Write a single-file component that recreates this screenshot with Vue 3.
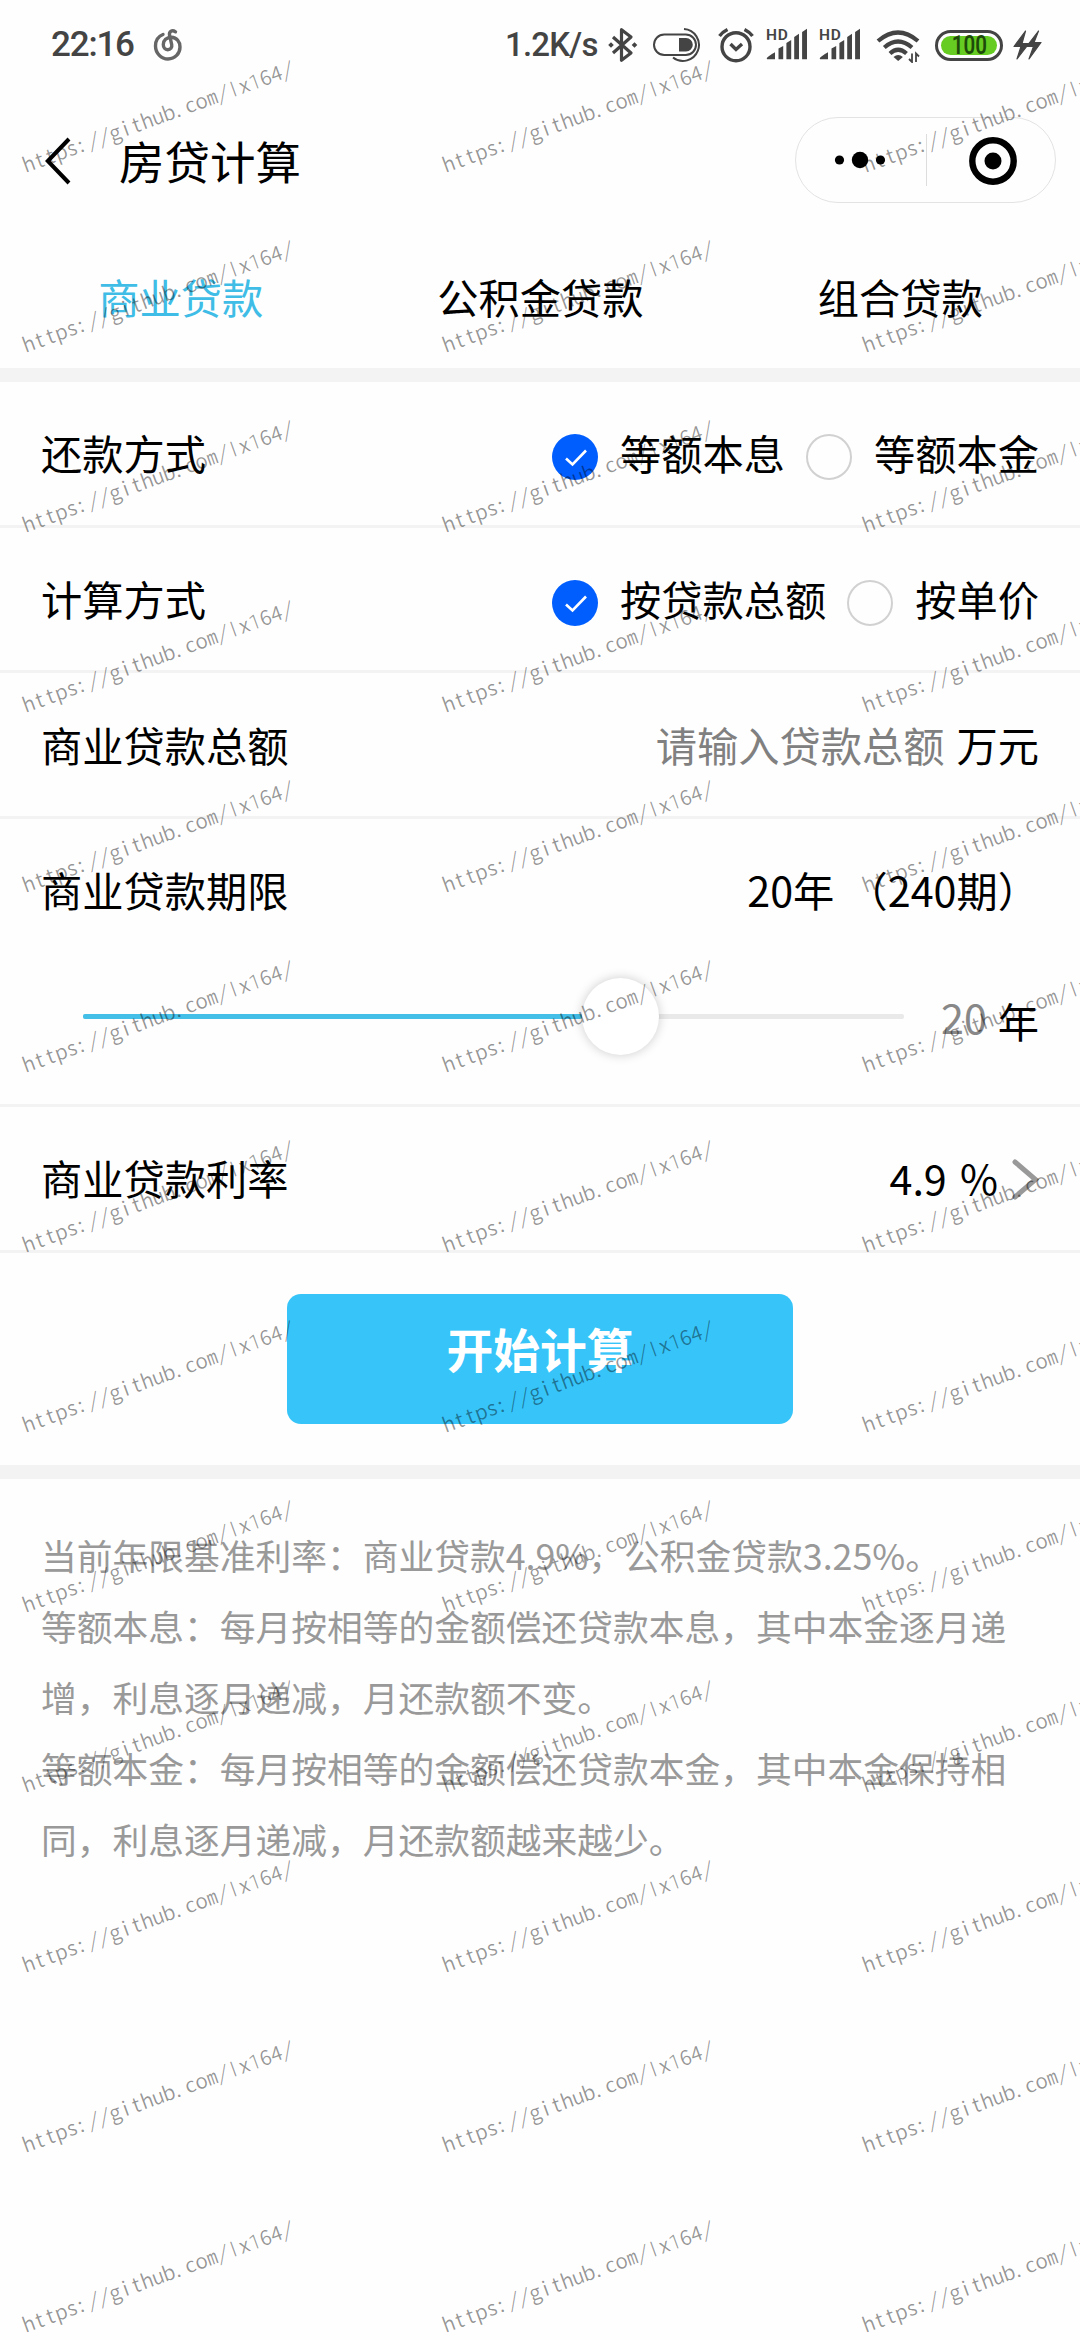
<script setup>
const tabs = [
  { name: '商业贷款', active: true },
  { name: '公积金贷款', active: false },
  { name: '组合贷款', active: false },
]

const radioRows = [
  { label: '还款方式', options: [{ text: '等额本息', on: true }, { text: '等额本金', on: false }] },
  { label: '计算方式', options: [{ text: '按贷款总额', on: true }, { text: '按单价', on: false }] },
]

const notes = [
  '当前年限基准利率：商业贷款4.9%，公积金贷款3.25%。',
  '等额本息：每月按相等的金额偿还贷款本息，其中本金逐月递增，利息逐月递减，月还款额不变。',
  '等额本金：每月按相等的金额偿还贷款本金，其中本金保持相同，利息逐月递减，月还款额越来越少。',
]

// watermark grid
const markText = 'https://github.com/lx164/'
const advance = 11.46
const nudge = { ':': -2, '.': -2.5, '/': -1.5 }
const markX = [...markText].map((c, i) => (i * advance + 5 + (nudge[c] || 0)).toFixed(2)).join(' ')
const marks = []
for (let r = 0; r < 13; r++) {
  for (let c = 0; c < 3; c++) marks.push({ x: 26.5 + c * 420, y: 172.5 + r * 180 })
}
</script>

<template>
  <div class="screen">
    <header class="status">
      <span class="time">22:16</span>
      <svg class="music" width="30" height="34" viewBox="0 0 30 34" fill="none" stroke="#666" stroke-width="3.4" stroke-linecap="round">
        <path d="M10 6.500C5 8.500 2.500 13 2.500 18C2.500 25 8 31 15 31C22 31 27 25.500 27 19C27 13.500 23.500 9.500 18.500 9.300C13.500 9.200 10.300 12.500 10.300 16.500C10.300 19.500 12 21.700 14.700 21.700C17.500 21.700 19.300 19.500 18.700 16.500L16.500 7C16 3.500 19 1.500 22.500 3.800" />
      </svg>
      <span class="speed">1.2K/s</span>
      <svg class="bt" width="32" height="36" viewBox="0 0 32 36" fill="none" stroke="#444" stroke-width="3.2" stroke-linejoin="round">
        <path d="M6 10L24 26L14.500 33.300V2.700L24 10L6 26" /><path d="M4 15.200l2.800 2.800l-2.800 2.800l-2.800-2.800zM27.500 15.200l2.800 2.800l-2.800 2.800l-2.800-2.800z" fill="#444" stroke="none" />
      </svg>
      <svg class="dock" width="52" height="36" viewBox="0 0 52 36" fill="none" stroke="#444" stroke-width="2">
        <path d="M32 2A16 16 0 1 1 21 30.500" /><rect x="2" y="7.500" width="42" height="20.500" rx="10.250" fill="#fff" /><path d="M27 11h7a6.800 6.800 0 0 1 0 13.600h-7z" fill="#444" stroke="none" />
      </svg>
      <svg class="alarm" width="36" height="36" viewBox="0 0 36 36" fill="none" stroke="#444" stroke-width="3.4">
        <circle cx="18" cy="19.700" r="14" /><path d="M12.500 17l5.500 5.500l6-5.500M1.500 9Q4.500 5 9.500 2.500M34.500 9Q31.500 5 26.500 2.500" />
      </svg>
      <svg v-for="n in 2" :key="n" class="signal" width="43" height="36" viewBox="0 0 43 36" fill="#444">
        <text x="0" y="12.500" class="hd">HD</text>
        <path d="M.7 31.700q0-2 8.300-6.500v7H1.200zM12.500 21.500l4.700-2.500v13.200h-4.700zM20.400 16l4.800-3v19.200h-4.800zM28.200 10l4.800-3.300v25.500h-4.800zM36.100 5l4.900-3.300v30.500h-4.900z" />
      </svg>
      <svg class="wifi" width="44" height="36" viewBox="0 0 44 36" fill="none" stroke="#444" stroke-width="4.200">
        <path d="M2 14Q22 -3 42 14M8.300 20.500Q22 8.500 36 20.500M14 26.500Q22 19 30.500 26.500" /><path d="M17.500 30q4.700-4 9.400 0l-4.700 4z" fill="#444" stroke="none" /><path d="M36 26.500v8.500l-3-3M40 35v-8.500l3 3" stroke-width="1.800" />
      </svg>
      <div class="battery"><div class="level"><span>100</span></div></div>
      <svg class="bolt" width="29" height="34" viewBox="0 0 29 34" fill="#444" stroke="#444" stroke-width="1.2" stroke-linejoin="round"><path d="M12.500 3L1 18.500h7L4 31L16 15.500h-7zM25.500 3L13.500 18.500h7L16 31L28 14.500h-7z" /></svg>
    </header>

    <nav class="titlebar">
      <svg class="back" width="26" height="48" viewBox="0 0 26 48" fill="none" stroke="#000" stroke-width="4"><path d="M24 2L2.800 24L24 46" /></svg>
      <h1>房贷计算</h1>
      <div class="capsule">
        <svg width="130" height="84" viewBox="0 0 130 84"><circle cx="43.500" cy="42" r="4.600" /><circle cx="64" cy="42" r="8.200" /><circle cx="84.500" cy="42" r="4.600" /></svg>
        <i></i>
        <svg width="128" height="84" viewBox="0 0 128 84"><circle cx="66" cy="43" r="20.700" fill="none" stroke="#000" stroke-width="6.400" /><circle cx="66" cy="43" r="8.500" /></svg>
      </div>
    </nav>

    <div class="tabs">
      <span v-for="t in tabs" :key="t.name" :class="{ active: t.active }">{{ t.name }}</span>
    </div>

    <section class="form">
      <div v-for="row in radioRows" :key="row.label" class="row">
        <span>{{ row.label }}</span>
        <div class="options">
          <label v-for="o in row.options" :key="o.text">
            <span class="radio" :class="{ on: o.on }">
              <svg v-if="o.on" width="46" height="46" viewBox="0 0 46 46" fill="none" stroke="#fff" stroke-width="2.600"><path d="M14 24.500L20.500 30.500L34 16.500" /></svg>
            </span>
            <span>{{ o.text }}</span>
          </label>
        </div>
      </div>
      <div class="row">
        <span>商业贷款总额</span>
        <div class="amount"><span class="placeholder">请输入贷款总额</span><span>万元</span></div>
      </div>
      <div class="term">
        <div class="term-head"><span>商业贷款期限</span><span class="period">20年 （240期）</span></div>
        <div class="slider">
          <div class="track"><div class="fill"></div><div class="thumb"></div></div>
          <span class="years">20</span><span class="unit">年</span>
        </div>
      </div>
      <div class="row">
        <span>商业贷款利率</span>
        <div class="rate"><span>4.9 %</span><svg width="28" height="44" viewBox="0 0 28 44" fill="none" stroke="#999" stroke-width="5" stroke-linecap="round"><path d="M4 4L24.500 21.500L4 39" /></svg></div>
      </div>
      <div class="action"><button>开始计算</button></div>
    </section>

    <section class="notes">
      <p v-for="n in notes" :key="n">{{ n }}</p>
    </section>

    <svg class="watermark" width="1080" height="2340" viewBox="0 0 1080 2340">
      <text v-for="(m, i) in marks" :key="i" :x="markX" y="0" :transform="`translate(${m.x} ${m.y}) rotate(-20)`">https:<tspan class="slash">//</tspan>github.co<tspan class="half">m</tspan><tspan class="slash">/</tspan><tspan class="plain">l</tspan>x<tspan class="plain">1</tspan>64<tspan class="slash">/</tspan></text>
    </svg>
  </div>
</template>

<style>
body { background: #fefefe; }
</style>

<style scoped>
.screen {
  position: relative;
  width: 1080px;
  height: 2340px;
  overflow: hidden;
  background: #fefefe;
  color: #000;
  font-family: "Noto Sans CJK SC", sans-serif;
  font-size: 41.25px;
  line-height: 60px;
}
.status {
  display: flex;
  align-items: center;
  height: 90px;
  padding-left: 51px;
  color: #444;
  font-family: Roboto, "Noto Sans CJK SC", sans-serif;
  font-weight: 500;
}
.status svg { flex: none; }
.time { width: 102px; font-size: 35px; letter-spacing: -1.2px; }
.speed { width: 101px; margin-left: 322px; font-size: 33px; letter-spacing: -0.8px; white-space: nowrap; }
.bt { margin-left: 1px; }
.dock { margin-left: 13px; }
.alarm { margin-left: 14px; }
.signal { margin-left: 12px; overflow: visible; }
.signal + .signal { margin-left: 10px; }
.hd { font: 600 15.500px Roboto, sans-serif; letter-spacing: 0.8px; }
.wifi { margin-left: 14px; }
.battery {
  box-sizing: border-box;
  width: 68px;
  height: 31px;
  margin-left: 15px;
  padding: 3px;
  border: 3px solid #444;
  border-radius: 16px;
}
.level {
  display: flex;
  align-items: center;
  justify-content: center;
  height: 19px;
  border-radius: 10px;
  background: #66cc22;
}
.level span {
  color: #1d4a0a;
  font-size: 25px;
  line-height: 19px;
  font-weight: 600;
  transform: scaleX(0.82);
}
.bolt { margin-left: 10px; }

.titlebar { display: flex; align-items: center; height: 142px; padding: 0 24px 0 45px; }
.back { flex: none; }
h1 { flex: 1; margin: 0 0 3px 48px; font-size: 45.500px; font-weight: 400; }
.capsule {
  display: flex;
  align-items: center;
  box-sizing: border-box;
  width: 261px;
  height: 86px;
  margin-bottom: 2px;
  border: 1px solid #e3e3e3;
  border-radius: 43px;
}
.capsule i { width: 1px; height: 52px; background: #ddd; }

.tabs {
  display: grid;
  grid-template-columns: repeat(3, 1fr);
  align-items: center;
  box-sizing: border-box;
  height: 150px;
  padding: 0 0 9px 1px;
  border-bottom: 14px solid #f3f3f3;
  text-align: center;
}
.tabs .active { color: #3fbde6; }

.form { border-bottom: 14px solid #f3f3f3; }
.row {
  display: flex;
  align-items: center;
  justify-content: space-between;
  box-sizing: border-box;
  height: 145.667px;
  padding: 0 41px 2px;
  border-bottom: 3px solid #f3f3f3;
}
.options { display: flex; gap: 21px; }
label { display: flex; align-items: center; gap: 22px; }
.radio {
  box-sizing: border-box;
  width: 46px;
  height: 46px;
  margin-top: 10px;
  border: 2px solid #d1d1d1;
  border-radius: 50%;
}
.radio.on { border: 0; background: #005eff; }
.radio svg { display: block; }
.amount { display: flex; gap: 12px; }
.placeholder { color: #808080; }
.term { box-sizing: border-box; height: 288px; border-bottom: 3px solid #f3f3f3; padding: 40px 41px 0; }
.term-head { display: flex; justify-content: space-between; }
.period { word-spacing: 3px; }
.slider { display: flex; align-items: center; height: 78px; margin-top: 59px; padding-left: 42px; }
.track { display: flex; align-items: center; width: 821px; height: 5px; border-radius: 2px; background: #e9e9e9; }
.fill { width: 499px; height: 5px; border-radius: 2px; background: #43bfe8; }
.thumb { flex: none; width: 77px; height: 77px; border-radius: 50%; background: #fff; box-shadow: 0 0 11px rgba(0, 0, 0, 0.2); }
.years { margin: 0 0 2px 37px; color: #888; }
.unit { margin: 7px 0 0 auto; }
.rate { display: flex; align-items: center; word-spacing: 4px; }
.rate svg { margin: 5px 0 0 13px; }
.action { display: flex; justify-content: center; height: 171px; padding-top: 41px; }
button {
  width: 506px;
  height: 130px;
  padding: 0 0 23px;
  border: 0;
  border-radius: 14px;
  background: #36c4f9;
  color: #fff;
  font: 700 46.750px "Noto Sans CJK SC", sans-serif;
}
.notes { padding: 40px 41px 0; color: #999; font-size: 35.750px; line-height: 71px; }
.notes p { margin: 0; }

.watermark { position: absolute; left: 0; top: 0; pointer-events: none; }
.watermark text {
  fill: #000;
  fill-opacity: 0.42;
  font-family: "Noto Sans CJK SC", sans-serif;
  font-size: 20.500px;
  font-weight: 350;
  text-anchor: middle;
}
.half { font-feature-settings: "hwid"; }
.slash { font-size: 19.500px; font-style: italic; }
.plain { font-family: Roboto, sans-serif; font-weight: 300; }
</style>
